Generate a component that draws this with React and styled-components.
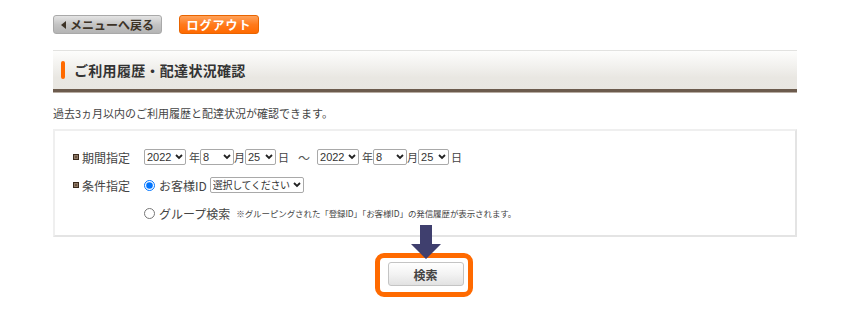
import React from "react";
import styled, { createGlobalStyle } from "styled-components";

const Global = createGlobalStyle`
  html, body { margin: 0; padding: 0; background: #fff; }
  body { font-family: "Noto Sans CJK JP", "Noto Sans", sans-serif; color: #333; }
`;

const Page = styled.div`
  position: relative;
  width: 850px;
  height: 310px;
  padding: 15px 53px 0;
  box-sizing: border-box;
`;

const TopBar = styled.div`
  display: flex;
  gap: 17px;
  align-items: center;
`;

const NavButton = styled.button`
  height: 19px;
  padding: 0;
  border-radius: 3px;
  font-family: inherit;
  font-size: 12px;
  font-weight: 700;
  line-height: 17px;
  white-space: nowrap;
  display: flex;
  align-items: center;
  justify-content: center;
  gap: 2px;
  cursor: pointer;
  border: 1px solid ${(p) => (p.$orange ? "#e86400" : "#a9a9a9")};
  color: ${(p) => (p.$orange ? "#fff" : "#3d3327")};
  background: ${(p) =>
    p.$orange
      ? "linear-gradient(#ffa25a 0%, #ff7a1c 50%, #ff6a00 100%)"
      : "linear-gradient(#e4e4e4 0%, #c4c4c4 50%, #b4b4b4 100%)"};
  width: ${(p) => (p.$orange ? "80px" : "109px")};
  letter-spacing: ${(p) => (p.$orange ? "1px" : "0")};
`;

const Tri = styled.span`
  display: inline-block;
  width: 0;
  height: 0;
  border-top: 4px solid transparent;
  border-bottom: 4px solid transparent;
  border-right: 5px solid #3d3327;
  margin-right: 2px;
`;

const TitleBar = styled.div`
  margin-top: 16px;
  height: 38px;
  border-top: 1px solid #e2e2e0;
  border-bottom: 3px solid #6c5b4d;
  background: linear-gradient(#fdfdfc 0%, #f2f1ee 40%, #e9e7e2 70%, #e8e6e1 100%);
  display: flex;
  align-items: center;
  gap: 9px;
  padding-left: 8px;
  box-shadow: 0 1px 0 #b7aca2;
`;

const Accent = styled.span`
  width: 4px;
  height: 18px;
  background: #ff6a00;
  border-radius: 2px;
`;

const Title = styled.h1`
  margin: 0;
  font-size: 14px;
  font-weight: 700;
  color: #333;
  letter-spacing: 0.3px;
`;

const Lead = styled.p`
  margin: 14px 0 0;
  font-size: 11px;
  color: #444;
  line-height: 14px;
`;

const FormBox = styled.div`
  margin-top: 9px;
  height: 108px;
  border: 2px solid #efefef;
  border-right-color: #e4e4e4;
  border-bottom-color: #e4e4e4;
  padding: 17px 0 0 18px;
  box-sizing: border-box;
  display: flex;
  flex-direction: column;
  gap: 10px;
`;

const Row = styled.div`
  display: flex;
  align-items: center;
  height: 18px;
  font-size: 11px;
  color: #444;
`;

const Label = styled.div`
  width: 71px;
  display: flex;
  align-items: center;
  gap: 3px;
  font-size: 12px;
  color: #444;
  visibility: ${(p) => (p.$hidden ? "hidden" : "visible")};
`;

const Bullet = styled.span`
  width: 6px;
  height: 6px;
  background: #6a5442;
  border: 1px solid #3a2a1c;
  box-sizing: border-box;
  box-shadow: inset 0 0 0 1px #8f7a66;
`;

const SelectWrap = styled.span`
  position: relative;
  display: inline-flex;
  width: ${(p) => p.$w}px;
  height: 16px;
`;

const NativeSelect = styled.select`
  appearance: none;
  -webkit-appearance: none;
  width: 100%;
  height: 16px;
  font-family: ${(p) =>
    p.$jp ? '"Noto Sans CJK JP", sans-serif' : '"Liberation Sans", Arial, sans-serif'};
  font-size: ${(p) => (p.$jp ? "10px" : "11px")};
  letter-spacing: ${(p) => (p.$jp ? "-0.3px" : "0")};
  line-height: 14px;
  padding: 0 11px 0 2px;
  border: 1px solid #a9a9a9;
  border-radius: 2px;
  background: #fff;
  color: #333;
  box-sizing: border-box;
  outline: none;
`;

const Chevron = styled.svg`
  position: absolute;
  right: 3px;
  top: 5px;
  pointer-events: none;
`;

function Select({ w, jp, children, defaultValue }) {
  return (
    <SelectWrap $w={w}>
      <NativeSelect $jp={jp} defaultValue={defaultValue}>
        {children}
      </NativeSelect>
      <Chevron width="8" height="6" viewBox="0 0 8 6">
        <path d="M1 1 L4 4 L7 1" fill="none" stroke="#222" strokeWidth="1.8" />
      </Chevron>
    </SelectWrap>
  );
}

const Unit = styled.span`
  font-size: 11px;
  margin: 0 ${(p) => p.$r}px 0 ${(p) => p.$l}px;
  color: #444;
`;

const Tilde = styled.span`
  margin: 0 7px 0 9px;
  font-size: 12px;
  color: #555;
`;

const Radio = styled.input`
  width: 11px;
  height: 11px;
  margin: 0 4px 0 0;
`;

const RadioText = styled.span`
  font-size: 12px;
  color: #444;
  margin-right: 3px;
`;

const Note = styled.span`
  font-size: 8.5px;
  color: #444;
  margin-left: 3px;
  letter-spacing: -0.1px;
`;

const SearchArea = styled.div`
  display: flex;
  justify-content: center;
  padding-top: 25px;
`;

const SearchButton = styled.button`
  width: 76px;
  height: 24px;
  border: 1px solid #c4c4c4;
  border-radius: 3px;
  background: linear-gradient(#ffffff 0%, #f3f3f3 50%, #e2e2e2 100%);
  font-family: inherit;
  font-size: 12px;
  font-weight: 700;
  color: #444;
  cursor: pointer;
  margin-left: 1px;
`;

const Highlight = styled.div`
  position: absolute;
  left: 375px;
  top: 253px;
  width: 98px;
  height: 44px;
  box-sizing: border-box;
  border: 5px solid #ff6a00;
  border-radius: 9px;
  pointer-events: none;
`;

const ArrowSvg = styled.svg`
  position: absolute;
  left: 410px;
  top: 224px;
`;

function DateGroup() {
  return (
    <>
      <Select w={42} defaultValue="2022">
        <option>2022</option>
      </Select>
      <Unit $l={3} $r={0}>年</Unit>
      <Select w={34} defaultValue="8">
        <option>8</option>
      </Select>
      <Unit $l={0} $r={0}>月</Unit>
      <Select w={31} defaultValue="25">
        <option>25</option>
      </Select>
      <Unit $l={2} $r={0}>日</Unit>
    </>
  );
}

export default function App() {
  return (
    <>
      <Global />
      <Page>
        <TopBar>
          <NavButton>
            <Tri />
            メニューへ戻る
          </NavButton>
          <NavButton $orange>ログアウト</NavButton>
        </TopBar>
        <TitleBar>
          <Accent />
          <Title>ご利用履歴・配達状況確認</Title>
        </TitleBar>
        <Lead>過去3ヵ月以内のご利用履歴と配達状況が確認できます。</Lead>
        <FormBox>
          <Row>
            <Label>
              <Bullet />
              期間指定
            </Label>
            <DateGroup />
            <Tilde>〜</Tilde>
            <DateGroup />
          </Row>
          <Row>
            <Label>
              <Bullet />
              条件指定
            </Label>
            <Radio type="radio" name="cond" defaultChecked />
            <RadioText>お客様ID</RadioText>
            <Select w={94} jp>
              <option>選択してください</option>
            </Select>
          </Row>
          <Row>
            <Label $hidden>
              <Bullet />
              条件指定
            </Label>
            <Radio type="radio" name="cond" />
            <RadioText>グループ検索</RadioText>
            <Note>※グルーピングされた「登録ID」「お客様ID」の発信履歴が表示されます。</Note>
          </Row>
        </FormBox>
        <SearchArea>
          <SearchButton>検索</SearchButton>
        </SearchArea>
        <Highlight />
        <ArrowSvg width="32" height="36" viewBox="0 0 32 36">
          <path d="M10 1 H22 V20 H31 L16 35 L1 20 H10 Z" fill="#3f3f6e" />
        </ArrowSvg>
      </Page>
    </>
  );
}
